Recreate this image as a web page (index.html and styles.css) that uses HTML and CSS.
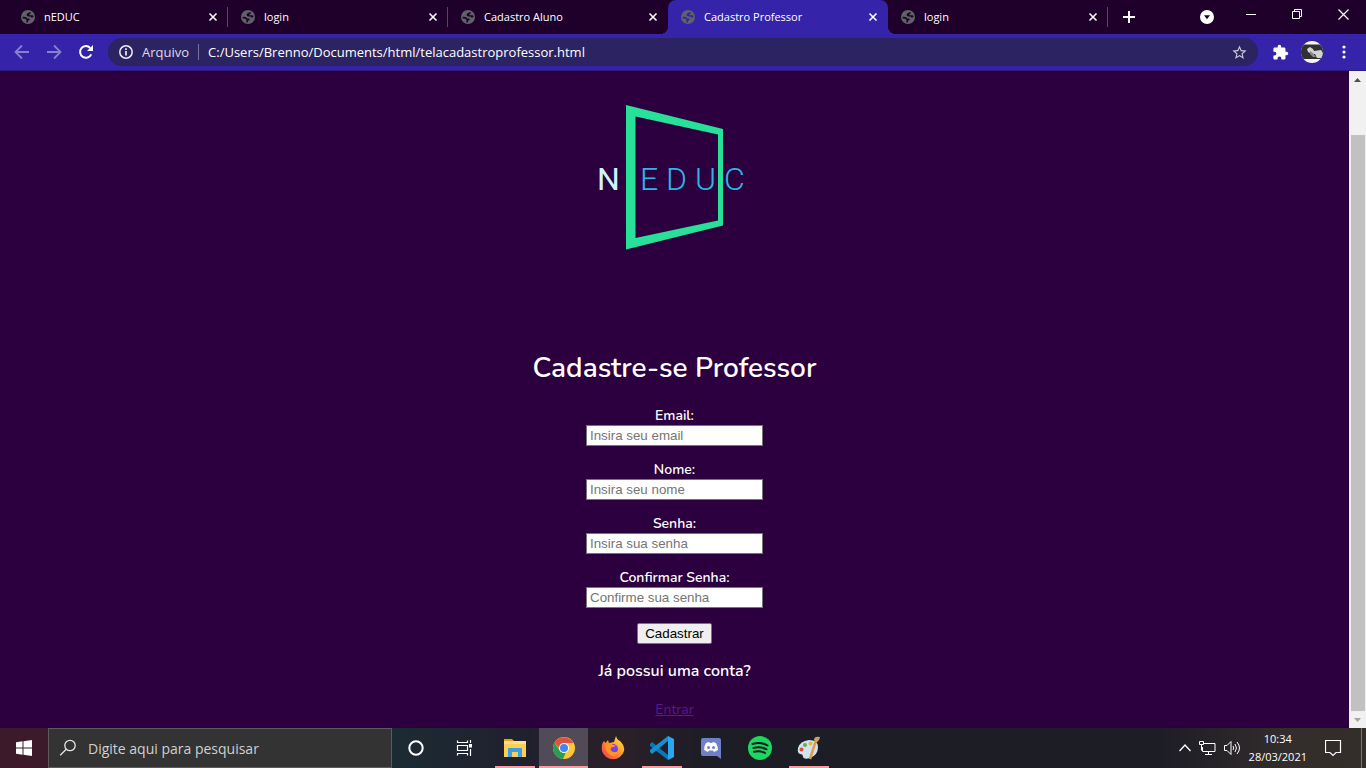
FILE: index.html
```html
<!DOCTYPE html>
<html lang="pt-BR">
<head>
<meta charset="utf-8">
<title>Cadastro Professor</title>
<link rel="stylesheet" href="styles.css">
</head>
<body>
<svg class="sprite" aria-hidden="true">
  <symbol id="globe" viewBox="0 0 14 14"><circle cx="7" cy="7" r="7" fill="#5f6368"/><path d="M9.600 2 6.800 3 5.600 4.400 6 6 7.600 6.600 9.400 6.400 10.200 7.600 12.600 7.200 12.300 5.600 10.800 5.200 8.600 5.200 8.200 4.400 9.800 3.600ZM1.600 6.800 5 7 6.200 8.400 8.400 8.600 8.800 9.800 7.400 10.600 6.800 12.400 5.200 12.300 5.600 10.200 4.400 8.800 1.700 8.400Z"/></symbol>
  <symbol id="close" viewBox="0 0 10 10"><path d="m1.500 1.500 7 7m0-7-7 7" fill="none" stroke="#fff" stroke-width="1.600"/></symbol>
</svg>

<header class="tabs">
  <div class="tab"><svg class="favicon"><use href="#globe"/></svg><span class="tab-title">nEDUC</span><button class="tab-close" aria-label="Fechar nEDUC"><svg><use href="#close"/></svg></button></div>
  <div class="tab"><svg class="favicon"><use href="#globe"/></svg><span class="tab-title">login</span><button class="tab-close" aria-label="Fechar login"><svg><use href="#close"/></svg></button></div>
  <div class="tab before-active"><svg class="favicon"><use href="#globe"/></svg><span class="tab-title">Cadastro Aluno</span><button class="tab-close" aria-label="Fechar Cadastro Aluno"><svg><use href="#close"/></svg></button></div>
  <div class="tab active"><svg class="favicon"><use href="#globe"/></svg><span class="tab-title">Cadastro Professor</span><button class="tab-close" aria-label="Fechar Cadastro Professor"><svg><use href="#close"/></svg></button></div>
  <div class="tab"><svg class="favicon"><use href="#globe"/></svg><span class="tab-title">login</span><button class="tab-close" aria-label="Fechar login"><svg><use href="#close"/></svg></button></div>
  <button class="new-tab" aria-label="Nova guia"><svg width="12" height="12"><path d="M6 0v12M0 6h12" stroke="#fff" stroke-width="2"/></svg></button>
  <div class="window-controls">
    <button class="tab-search" aria-label="Pesquisar guias"><svg width="14" height="14"><circle cx="7" cy="7" r="7" fill="#fff"/><path d="M4 5.200h6L7 9.200Z" fill="#1f002b"/></svg></button>
    <button aria-label="Minimizar"><svg width="11" height="11"><path d="M0 5.500h10" stroke="#fff"/></svg></button>
    <button aria-label="Restaurar"><svg width="11" height="11"><path d="M.5 2.500h7v7h-7ZM2.500 2.500v-2h7v7h-2" fill="none" stroke="#fff"/></svg></button>
    <button aria-label="Fechar"><svg width="11" height="11"><path d="m.5.500 10 10m0-10-10 10" stroke="#fff" stroke-width="1.200"/></svg></button>
  </div>
</header>

<nav class="toolbar">
  <button aria-label="Voltar"><svg width="16" height="16"><path d="M15 8H2M8 1.500 1.500 8 8 14.500" fill="none" stroke="#8780cc" stroke-width="1.800"/></svg></button>
  <button aria-label="Avançar"><svg width="16" height="16"><path d="M1 8h13M8 1.500 14.500 8 8 14.500" fill="none" stroke="#8780cc" stroke-width="1.800"/></svg></button>
  <button aria-label="Atualizar"><svg width="16" height="16"><path d="M13.200 10.300A5.800 5.800 0 1 1 12.200 4" fill="none" stroke="#fff" stroke-width="2"/><path d="M15 1v6H9Z" fill="#fff"/></svg></button>
  <div class="omnibox">
    <svg width="14" height="14"><circle cx="7" cy="7" r="6.200" fill="none" stroke="#eee" stroke-width="1.500"/><path d="M7 6v4.500M7 3.200v1.700" stroke="#eee" stroke-width="1.700"/></svg>
    <span class="scheme">Arquivo</span>
    <input class="address" type="text" aria-label="Endereço" value="C:/Users/Brenno/Documents/html/telacadastroprofessor.html">
    <button aria-label="Adicionar aos favoritos"><svg width="17" height="17" viewBox="0 0 24 24"><path fill="#c8c6d8" d="m22 9.240-7.190-.62L12 2 9.190 8.630 2 9.240l5.460 4.730L5.820 21 12 17.270 18.180 21l-1.630-7.030ZM12 15.400l-3.760 2.270 1-4.280-3.320-2.880 4.380-.38L12 6.100l1.710 4.040 4.380.38-3.320 2.880 1 4.280Z"/></svg></button>
  </div>
  <button class="extensions" aria-label="Extensões"><svg width="17" height="17" viewBox="0 0 24 24"><path fill="#fff" d="M20.500 11H19V7a2 2 0 0 0-2-2h-4V3.500a2.500 2.500 0 0 0-5 0V5H4a2 2 0 0 0-2 2v3.800h1.500a2.700 2.700 0 0 1 0 5.400H2V20c0 1.100.9 2 2 2h3.800v-1.500a2.700 2.700 0 0 1 5.400 0V22H17a2 2 0 0 0 2-2v-4h1.500a2.500 2.500 0 0 0 0-5Z"/></svg></button>
  <button class="profile" aria-label="Perfil"><svg width="22" height="22"><defs><clipPath id="round"><circle cx="11" cy="11" r="11"/></clipPath></defs><g clip-path="url(#round)"><path fill="#f5f5f5" d="M0 0h22v22H0z"/><path fill="#303030" d="M0 3.500h22v14.500H0z"/><path fill="#d2d2d2" d="m6 8 3-2 3 2 1 2 7-1 2 3-1 5h-5l-2-4-3 0-4-2Z"/><path fill="#8b8b8b" d="m9 10 3 2 3 4h-3l-3-3Z"/></g></svg></button>
  <button aria-label="Menu"><svg width="4" height="14" fill="#fff"><circle cx="2" cy="2" r="1.600"/><circle cx="2" cy="7" r="1.600"/><circle cx="2" cy="12" r="1.600"/></svg></button>
</nav>

<div class="viewport">
  <main class="page">
    <svg class="logo" viewBox="3 0 150 150" role="img" aria-label="nEDUC">
      <path fill="#28e098" fill-rule="evenodd" d="m29 2 97 24v96.500L29 146.500ZM38.500 13.500v121.500l82.500-17.500V31.500Z"/>
      <g class="logo-text">
        <text x="0" y="87" class="logo-n">N</text>
        <text x="43" y="87">E</text><text x="69" y="87">D</text><text x="98" y="87">U</text><text x="127" y="87">C</text>
      </g>
    </svg>
    <h1>Cadastre-se Professor</h1>
    <form class="signup">
      <div class="field"><label for="email">Email:</label><input id="email" type="email" placeholder="Insira seu email"></div>
      <div class="field"><label for="nome">Nome:</label><input id="nome" type="text" placeholder="Insira seu nome"></div>
      <div class="field"><label for="senha">Senha:</label><input id="senha" type="password" placeholder="Insira sua senha"></div>
      <div class="field"><label for="confirmar">Confirmar Senha:</label><input id="confirmar" type="password" placeholder="Confirme sua senha"></div>
      <button class="submit" type="submit">Cadastrar</button>
    </form>
    <p class="question">Já possui uma conta?</p>
    <a class="enter" href="#">Entrar</a>
  </main>
  <div class="scrollbar" aria-hidden="true">
    <svg width="17" height="17"><path d="m5 11 3.500-4L12 11Z" fill="#505050"/></svg>
    <div class="track"><div class="thumb"></div></div>
    <svg width="17" height="17"><path d="m5 7 3.500 4L12 7Z" fill="#a3a3a3"/></svg>
  </div>
</div>

<footer class="taskbar">
  <button class="start" aria-label="Iniciar"><svg width="16" height="16"><path fill="#fff" d="M0 2.200 6.500 1.300V7.500H0ZM7.500 1.200 16 0v7.500H7.500ZM0 8.500h6.500v6.200L0 13.800ZM7.500 8.500H16V16l-8.500-1.200Z"/></svg></button>
  <label class="search"><svg width="18" height="18"><circle cx="11" cy="6.500" r="5.200" fill="none" stroke="#e4e4e4" stroke-width="1.300"/><path d="m7.200 10.300-6 6" stroke="#e4e4e4" stroke-width="1.300"/></svg><input type="search" aria-label="Pesquisar" placeholder="Digite aqui para pesquisar"></label>
  <div class="apps">
    <button class="system" aria-label="Cortana"><svg width="16" height="16"><circle cx="8" cy="8" r="6.700" fill="none" stroke="#fff" stroke-width="2"/></svg></button>
    <button class="system" aria-label="Visão de tarefas"><svg width="17" height="16"><path d="M1.500.5v2h10v-2M1.500 15.500v-2h10v2M1.500 5.500h10v5h-10ZM14.500 0v3M14.500 9v7" fill="none" stroke="#fff" stroke-width="1.200"/><path d="M13 4h3v3.500h-3z" fill="#fff"/></svg></button>
    <button class="running" aria-label="Explorador de Arquivos"><svg width="22" height="20"><path fill="#e8a30c" d="M0 1h8l2 2H0Z"/><path fill="#ffe08a" d="M0 3h22v16H0Z"/><path fill="#f9cf55" d="M0 6h22v13H0Z"/><path fill="#3c9ee5" d="M4 11q0-1 1-1h12q1 0 1 1v8h-4v-5H8v5H4Z"/></svg></button>
    <button class="running current" aria-label="Google Chrome"><svg width="22" height="22"><circle cx="11" cy="11" r="11" fill="#fcc934"/><path fill="#e0523f" d="M1.500 5.500A11 11 0 0 1 20.500 6H11l-5 5Z"/><path fill="#299c56" d="M1.500 5.500 6.700 13.500q1.800 3 6 2.200L10 22A11 11 0 0 1 1.500 5.500Z"/><circle cx="11" cy="11" r="5" fill="#fff"/><circle cx="11" cy="11" r="4" fill="#4285f4"/></svg></button>
    <button aria-label="Firefox"><svg width="24" height="24"><defs><linearGradient id="fire" x1="1" y1="0" x2="0" y2="1"><stop stop-color="#fff34d"/><stop offset=".45" stop-color="#ff9a28"/><stop offset="1" stop-color="#f72b59"/></linearGradient></defs><path fill="url(#fire)" d="M3 5 4.500 7 7 4l1 3 5-1 2-6q1 4 4 5 5 5 4 10A11.500 11.500 0 0 1 1 15Q0 8 3 5Z"/><circle cx="12" cy="13" r="5" fill="#7542e5"/><path fill="#ff9525" d="M4 9q5-4 8 0l3 .5q-2 2-5 2-1 2 1 4 4 2 6-1-1 6-7 5-5-2-6-10.500Z"/></svg></button>
    <button class="running" aria-label="Visual Studio Code"><svg width="24" height="24"><path fill="#0877bb" d="m0 8 2-2 16 13v5L0 10Z"/><path fill="#158fd2" d="m0 16 2 2L18 5V0L0 14Z"/><path fill="#2ba6ef" d="m18 0 6 3v18l-6 3Z"/></svg></button>
    <button aria-label="Discord"><svg width="20" height="21"><path fill="#7080c8" d="M2 0h16q2 0 2 2v19l-4-3H2q-2 0-2-2V2q0-2 2-2Z"/><path fill="#fff" d="m5 5 3-1 1 1h2l1-1 3 1q2 4 2 7l-4 2-1-1.500H8L7 14l-4-2q0-4 2-7Z"/><circle cx="7.500" cy="9.500" r="1.500" fill="#7080c8"/><circle cx="12.500" cy="9.500" r="1.500" fill="#7080c8"/></svg></button>
    <button aria-label="Spotify"><svg width="24" height="24"><circle cx="12" cy="12" r="12" fill="#1ed760"/><path d="M4.500 8q8-2.500 15 1.500M5.500 12q7-2 13 1.300M6 15.700q6-1.500 11 1.300" fill="none" stroke="#191b20" stroke-width="2" stroke-linecap="round"/></svg></button>
    <button class="running" aria-label="Paint"><svg width="24" height="24"><path fill="#cfe3f2" d="M1 12Q3 5 12 4q9 0 9 7 0 8-8 11-6 2-7-1 0-3-3-3-3-1-2-6Z"/><circle cx="8" cy="9" r="2" fill="#5cb73d"/><circle cx="13.500" cy="7.500" r="2" fill="#f2b51d"/><circle cx="4.500" cy="13.500" r="2" fill="#df4b38"/><path d="M19 4.500 13 23" stroke="#e39a48" stroke-width="2.500"/><path fill="#c7a06c" d="M17 4q0-4 6-3-1 5-4 5Z"/></svg></button>
  </div>
  <div class="tray">
    <svg width="12" height="8"><path d="m.5 7 5.500-6 5.500 6" fill="none" stroke="#fff" stroke-width="1.300"/></svg>
    <svg width="17" height="15"><path d="M5 2.500h11v8H3.500V6M6 13.500h7M9.500 10.500v3M.5.500h4v3h-4ZM2.500 3.500v6" fill="none" stroke="#fff"/></svg>
    <svg width="17" height="14"><path d="M.5 4.500H3l4-4v13l-4-4H.5ZM9 5q1.500 2 0 4M11 3q3 4 0 8M13 1q5 6 0 12" fill="none" stroke="#fff"/></svg>
    <time class="clock" datetime="2021-03-28T10:34"><span>10:34</span><span>28/03/2021</span></time>
    <button class="notifications" aria-label="Notificações"><svg width="17" height="17"><path d="M.5.500h15v12H11l-3 3-3-3H.5Z" fill="none" stroke="#fff" stroke-width="1.200"/></svg></button>
  </div>
</footer>
</body>
</html>
```

FILE: styles.css
```css
* { box-sizing: border-box; }

body {
  display: flex;
  flex-direction: column;
  height: 100vh;
  margin: 0;
  overflow: hidden;
  background: #2c003e;
  font-family: "Segoe UI", "Open Sans", "Noto Sans", sans-serif;
  color: #fff;
}

button { padding: 0; border: 0; background: none; }
svg { flex: none; display: block; }
.sprite { position: absolute; width: 0; height: 0; }

.tabs { display: flex; flex: none; height: 34px; padding-left: 8px; background: #1f002b; }
.tab {
  display: flex;
  align-items: center;
  flex: 0 1 220px;
  gap: 9px;
  padding: 0 10px 1px 13px;
  background: linear-gradient(#594561, #594561) right center / 1px 20px no-repeat;
  font-size: 11px;
}
.tab.active { border-radius: 8px 8px 0 0; background: #3523a9; }
.tab.before-active { background: radial-gradient(circle at 0 0, transparent 8px, #3523a9 8px) right bottom / 8px 8px no-repeat; }
.tab.active + .tab {
  background:
    radial-gradient(circle at 100% 0, transparent 8px, #3523a9 8px) left bottom / 8px 8px no-repeat,
    linear-gradient(#594561, #594561) right center / 1px 20px no-repeat;
}
.favicon { width: 14px; height: 14px; fill: #1f002b; }
.active .favicon { fill: #3523a9; }
.tab-title { flex: 1; white-space: nowrap; }
.tab-close svg { width: 10px; height: 10px; }
.new-tab { padding: 0 15px; }
.window-controls { display: flex; align-items: flex-start; margin-left: auto; }
.window-controls button { display: flex; justify-content: center; width: 46px; padding-top: 9px; }
.window-controls .tab-search { width: 42px; padding-top: 10px; }

.toolbar {
  display: flex;
  align-items: center;
  flex: none;
  gap: 16px;
  height: 37px;
  padding: 0 20px 0 14px;
  border-bottom: 1px solid #291b80;
  background: #3523a9;
}
.omnibox {
  display: flex;
  align-items: center;
  flex: 1;
  gap: 9px;
  height: 28px;
  margin-left: -2px;
  padding: 0 10px 0 11px;
  border-radius: 14px;
  background: #2c2362;
  font-size: 13px;
}
.scheme { padding-right: 9px; border-right: 1px solid #77719a; line-height: 16px; color: #dddbea; }
.address { flex: 1; padding: 0; border: 0; background: none; font: inherit; color: #fff; }
.extensions { margin: 0 -4px 0 -2px; }
.profile { margin-right: 3px; }

.viewport { display: flex; flex: 1; min-height: 0; }
.page {
  display: flex;
  flex-direction: column;
  align-items: center;
  flex: 1;
  overflow: hidden;
  padding-top: 32px;
  font-family: Nunito, "Open Sans", "Noto Sans", sans-serif;
}
.logo { flex: none; width: 150px; height: 150px; overflow: visible; }
.logo-text { fill: #2eb5e6; font: 300 32px Roboto, sans-serif; }
.logo-n { fill: #d0f4ff; font-weight: 400; }
h1 { margin: 93px 0 16px; font-size: 28px; font-weight: 600; line-height: 44px; }
.signup { display: flex; flex-direction: column; align-items: center; gap: 14px; }
.field { display: flex; flex-direction: column; align-items: center; }
.field label { font-size: 14px; font-weight: 600; line-height: 19px; }
.field input, .submit { height: 21px; border: 1px solid #767676; font-family: "Liberation Sans", Arial, sans-serif; }
.field input { width: 177px; padding: 1px 3px; background: #fff; }
.field input::placeholder { color: #757575; }
.submit { margin-top: 1px; padding: 1px 7px; border-radius: 2px; background: #efefef; color: #000; }
.question { margin: 15px 0 17px; font-size: 16px; font-weight: 600; line-height: 24px; }
.enter { font-size: 14px; line-height: 20px; color: #551a8b; }

.scrollbar { display: flex; flex-direction: column; width: 17px; background: #f1f1f1; }
.track { flex: 1; padding: 47px 1px 0 2px; }
.thumb { height: 100%; background: #c1c1c1; }

.taskbar {
  display: flex;
  flex: none;
  height: 40px;
  background: linear-gradient(90deg, #3d1a2a 0, #3d1a2a 48px, #1c2b33 392px, #20202d 530px, #2b2028 620px, #1d1d26 700px, #1d1d26 1160px, #332d2c 1290px, #332e29 100%);
}
.start { display: flex; align-items: center; justify-content: center; width: 48px; }
.search {
  display: flex;
  align-items: center;
  gap: 11px;
  width: 344px;
  padding-left: 10px;
  border: 1px solid #5b5b5b;
  background: #333;
}
.search input { flex: 1; min-width: 0; padding: 0; border: 0; background: none; font: 14px "Segoe UI", "Open Sans", sans-serif; }
.search input::placeholder { color: #d0d0d0; }
.apps { display: flex; }
.apps button { display: flex; align-items: center; justify-content: center; width: 49px; }
.apps .system { padding-right: 2px; }
.apps .running { background: linear-gradient(#f99aa1, #f99aa1) center bottom / 40px 2px no-repeat; }
.apps .current { background: linear-gradient(#f99aa1, #f99aa1) center bottom / 49px 2px no-repeat, #504b57; }
.tray { display: flex; align-items: center; gap: 8px; margin-left: auto; }
.clock { display: flex; flex-direction: column; align-items: center; font-size: 11px; line-height: 18px; }
.notifications { display: flex; align-items: center; height: 40px; margin-right: 4px; padding: 0 19px 0 10px; border-right: 1px solid #777; }
```
